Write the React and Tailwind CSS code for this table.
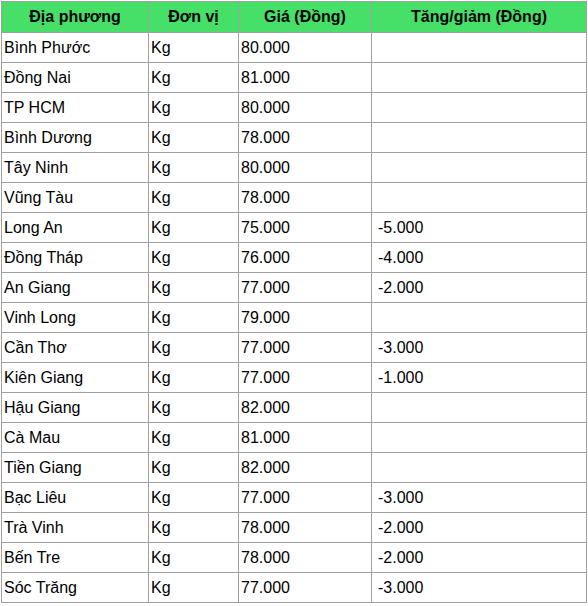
const rows = [
  ["Bình Phước", "Kg", "80.000", ""],
  ["Đồng Nai", "Kg", "81.000", ""],
  ["TP HCM", "Kg", "80.000", ""],
  ["Bình Dương", "Kg", "78.000", ""],
  ["Tây Ninh", "Kg", "80.000", ""],
  ["Vũng Tàu", "Kg", "78.000", ""],
  ["Long An", "Kg", "75.000", "-5.000"],
  ["Đồng Tháp", "Kg", "76.000", "-4.000"],
  ["An Giang", "Kg", "77.000", "-2.000"],
  ["Vinh Long", "Kg", "79.000", ""],
  ["Cần Thơ", "Kg", "77.000", "-3.000"],
  ["Kiên Giang", "Kg", "77.000", "-1.000"],
  ["Hậu Giang", "Kg", "82.000", ""],
  ["Cà Mau", "Kg", "81.000", ""],
  ["Tiền Giang", "Kg", "82.000", ""],
  ["Bạc Liêu", "Kg", "77.000", "-3.000"],
  ["Trà Vinh", "Kg", "78.000", "-2.000"],
  ["Bến Tre", "Kg", "78.000", "-2.000"],
  ["Sóc Trăng", "Kg", "77.000", "-3.000"],
];

export default function App() {
  return (
    <div className="bg-white min-h-screen pt-px pl-px font-['Liberation_Sans',Arial,sans-serif] text-black">
      <table className="table-fixed border-collapse w-[585px]">
        <colgroup>
          <col className="w-[147px]" />
          <col className="w-[90px]" />
          <col className="w-[133px]" />
          <col className="w-[215px]" />
        </colgroup>
        <thead>
          <tr className="bg-[#46e068] text-[16px] font-bold">
            <th className="h-[31px] border border-[#a0a0a0] p-0 text-center">Địa phương</th>
            <th className="h-[31px] border border-[#a0a0a0] p-0 text-center">Đơn vị</th>
            <th className="h-[31px] border border-[#a0a0a0] p-0 text-center">Giá (Đồng)</th>
            <th className="h-[31px] border border-[#a0a0a0] p-0 text-center">Tăng/giảm (Đồng)</th>
          </tr>
        </thead>
        <tbody className="text-[16px]">
          {rows.map((r, i) => (
            <tr key={i}>
              <td className="h-[30px] border border-[#a0a0a0] py-0 px-[2px] whitespace-nowrap">{r[0]}</td>
              <td className="h-[30px] border border-[#a0a0a0] py-0 px-[2px] whitespace-nowrap">{r[1]}</td>
              <td className="h-[30px] border border-[#a0a0a0] py-0 px-[2px] whitespace-nowrap">{r[2]}</td>
              <td className="h-[30px] border border-[#a0a0a0] py-0 pl-[6px] pr-[2px] whitespace-nowrap">{r[3]}</td>
            </tr>
          ))}
        </tbody>
      </table>
    </div>
  );
}
